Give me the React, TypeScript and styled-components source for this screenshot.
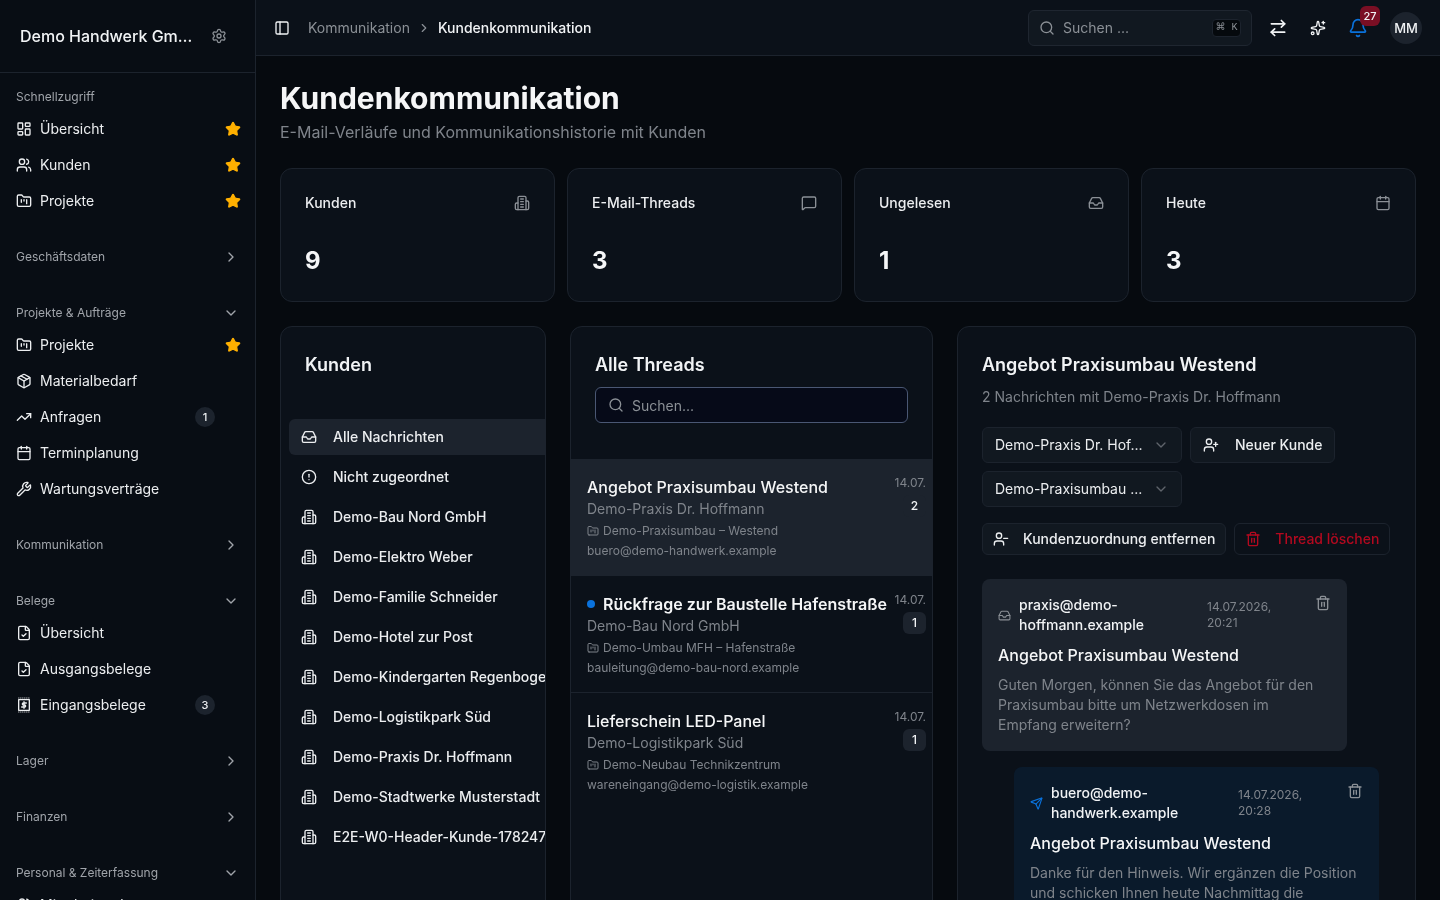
import React from "react";
import styled, { createGlobalStyle } from "styled-components";
import {
  ArrowRightLeft, Bell, Calendar, ChevronDown, ChevronRight, CircleAlert, FileCheck, FolderKanban,
  Inbox, LayoutDashboard, MessageSquare, Package, PanelLeft, Search, Send, Settings, Sparkles, Star,
  Trash2, TrendingUp, UserMinus, UserPlus, Users, Wrench,
} from "lucide-react";

const GlobalStyle = createGlobalStyle`
  html, body { margin: 0; height: 100%; background: #060a0f; overflow: hidden; }
  body { font-family: Inter, "Liberation Sans", sans-serif; color: #f1f3f5; font-size: 14px; line-height: 20px; -webkit-font-smoothing: antialiased; }
  * { box-sizing: border-box; }
`;

const Shell = styled.div`display: flex; height: 900px; overflow: hidden; will-change: transform;`;
const Sidebar = styled.aside`width: 256px; flex: none; background: #080d14; border-right: 1px solid #1c232d; overflow: hidden;`;
const Brand = styled.div`height: 73px; display: flex; align-items: center; padding: 0 20px; gap: 18px; border-bottom: 1px solid #1c232d;`;
const BrandName = styled.div`font-size: 16px; font-weight: 500; color: #f1f3f5; width: 173px; white-space: nowrap; overflow: hidden; text-overflow: ellipsis;`;
const SideNav = styled.nav`padding: 7px 16px 0; display: flex; flex-direction: column; gap: 21px;`;
const Section = styled.section<{ $open: boolean }>`padding-bottom: ${(p) => (p.$open ? 0 : 3)}px;`;
const SectionLabel = styled.div`height: 32px; padding-top: 2px; display: flex; align-items: center; justify-content: space-between; font-size: 12px; color: #a0a4aa; svg { color: #a0a4aa; }`;
const NavList = styled.div`margin-top: -1px; display: flex; flex-direction: column;`;
const NavRow = styled.div`height: 36px; display: flex; align-items: center; gap: 8px; color: #eceef0; font-size: 14px;`;
const NavName = styled.span`flex: 1; white-space: nowrap;`;
const NavStar = styled.span`display: flex; margin-right: -2px; color: #ffb000;`;
const NavBadge = styled.span`width: 20px; height: 20px; border-radius: 50%; background: #1c232d; font-size: 11px; font-weight: 500; display: flex; align-items: center; justify-content: center; margin-right: 24px;`;

const Content = styled.div`flex: 1; min-width: 0; display: flex; flex-direction: column;`;
const TopBar = styled.header`height: 56px; flex: none; background: #0b1119; border-bottom: 1px solid #1c232d; display: flex; align-items: center; padding: 0 18px 0 18px;`;
const Crumbs = styled.div`display: flex; align-items: center; margin-left: 18px; flex: 1;`;
const CrumbMuted = styled.span`color: #8b9096;`;
const CrumbSep = styled.span`display: flex; color: #8b9096; margin: 0 7px;`;
const CrumbNow = styled.span`color: #f1f3f5; font-weight: 500;`;
const TopSearch = styled.div`width: 224px; height: 36px; border: 1px solid #1f2630; border-radius: 6px; background: #111820; display: flex; align-items: center; padding: 0 10px; gap: 8px; color: #8b9096;`;
const TopSearchText = styled.span`flex: 1;`;
const Kbd = styled.span`width: 29px; height: 18px; border: 1px solid #1c232d; border-radius: 4px; background: #05090d; font-size: 10px; color: #8b9096; display: flex; align-items: center; justify-content: center; font-family: "Liberation Mono", "DejaVu Sans", monospace;`;
const TopActions = styled.div`display: flex; align-items: center; margin-left: 16px; color: #f1f3f5;`;
const IconSlot = styled.span<{ $blue?: boolean }>`position: relative; width: 20px; height: 20px; margin-right: 20px; display: flex; align-items: center; justify-content: center; color: ${(p) => (p.$blue ? "#0a72dc" : "#f1f3f5")};`;
const BellCount = styled.span`position: absolute; left: 12px; top: -12px; width: 20px; height: 20px; border-radius: 6px; background: #7a0f24; color: #f1f3f5; font-size: 11px; font-weight: 500; display: flex; align-items: center; justify-content: center;`;
const Avatar = styled.span`width: 32px; height: 32px; margin-left: 2px; border-radius: 50%; background: #1c232d; font-size: 13px; font-weight: 500; display: flex; align-items: center; justify-content: center;`;

const Main = styled.main`flex: 1; padding: 24px; overflow: hidden; min-height: 0;`;
const Title = styled.h1`margin: 0; font-size: 30px; line-height: 36px; font-weight: 700; color: #f5f6f7;`;
const Subtitle = styled.p`margin: 4px 0 0; font-size: 16px; line-height: 24px; color: #7f848b;`;
const Stats = styled.div`display: grid; grid-template-columns: repeat(4, 1fr); gap: 12px; margin-top: 24px;`;
const StatCard = styled.div`height: 134px; border: 1px solid #1c232d; border-radius: 12px; background: #0b1119; padding: 24px;`;
const StatHead = styled.div`display: flex; justify-content: space-between; align-items: center; font-weight: 500; color: #eceef0; svg { color: #8b9096; }`;
const StatValue = styled.div`margin-top: 32px; font-size: 24px; line-height: 32px; font-weight: 700; color: #f5f6f7;`;
const Panels = styled.div`display: grid; grid-template-columns: 266px 363px 459px; gap: 24px; margin-top: 24px;`;
const Panel = styled.section`height: 620px; border: 1px solid #1c232d; border-radius: 12px; background: #0b1119; overflow: hidden;`;
const PanelHead = styled.div`padding: 24px 24px 0;`;
const PanelTitle = styled.h2`margin: 0; font-size: 18px; line-height: 28px; font-weight: 600; color: #f1f3f5;`;

const CustomerList = styled.div`margin-top: 40px; padding-left: 8px; display: flex; flex-direction: column; gap: 4px;`;
const CustomerRow = styled.div<{ $active?: boolean }>`height: 36px; display: flex; align-items: center; gap: 16px; padding-left: 12px; border-radius: 6px 0 0 6px; white-space: nowrap; color: #eceef0; font-weight: 500; background: ${(p) => (p.$active ? "#1c232d" : "transparent")}; svg { flex: none; }`;

const ThreadSearch = styled.div`height: 36px; margin-top: 8px; border: 1px solid #4a5773; border-radius: 6px; background: #060a18; display: flex; align-items: center; gap: 8px; padding: 0 12px; color: #8b9096;`;
const ThreadSearchText = styled.span`padding-top: 2px;`;
const ThreadList = styled.div`margin-top: 36px;`;
const ThreadRow = styled.div<{ $active?: boolean }>`height: 117px; display: flex; gap: 8px; padding: 16px 6px 0 16px; border-bottom: 1px solid #1c232d; background: ${(p) => (p.$active ? "#1c232d" : "transparent")}; &:last-child { border-bottom: 0; }`;
const ThreadMain = styled.div`flex: 1; min-width: 0;`;
const ThreadTitle = styled.div<{ $unread?: boolean }>`display: flex; align-items: center; gap: 8px; font-size: 16px; line-height: 24px; white-space: nowrap; font-weight: ${(p) => (p.$unread ? 600 : 500)}; color: #f5f6f7;`;
const UnreadDot = styled.span`width: 8px; height: 8px; border-radius: 50%; background: #0a72dc; flex: none;`;
const ThreadCustomer = styled.div`color: #7f848b;`;
const ThreadProject = styled.div`margin-top: 4px; font-size: 12px; line-height: 16px; color: #7f848b; display: flex; align-items: center; gap: 4px;`;
const ThreadMail = styled.div`margin-top: 4px; font-size: 12px; line-height: 16px; color: #7f848b;`;
const ThreadSide = styled.div`width: 31px; flex: none; display: flex; flex-direction: column; align-items: flex-end; gap: 4px;`;
const ThreadDate = styled.div`font-size: 12px; line-height: 16px; color: #7f848b;`;
const CountBadge = styled.span`width: 23px; height: 22px; border-radius: 6px; background: #1c232d; color: #f1f3f5; font-size: 12px; font-weight: 500; display: flex; align-items: center; justify-content: center;`;

const PanelSub = styled.p`margin: 8px 0 0; color: #7f848b;`;
const Controls = styled.div`display: flex; flex-wrap: wrap; gap: 8px; margin-top: 20px; width: 360px;`;
const SelectBox = styled.div`width: 200px; height: 36px; border: 1px solid #1c232d; border-radius: 6px; background: #111820; display: flex; align-items: center; justify-content: space-between; padding: 0 12px; color: #eceef0; svg { color: #5f646b; }`;
const Actions = styled.div`display: flex; gap: 8px; margin-top: 16px;`;
const ActionBtn = styled.div<{ $danger?: boolean; $tall?: boolean }>`height: ${(p) => (p.$tall ? 36 : 32)}px; border: 1px solid #1c232d; border-radius: 6px; background: ${(p) => (p.$danger ? "#0b1119" : "#111820")}; display: flex; align-items: center; gap: ${(p) => (p.$tall ? 16 : 14)}px; padding: 0 ${(p) => (p.$tall ? 12 : 10)}px; font-weight: 500; white-space: nowrap; color: ${(p) => (p.$danger ? "#b3091f" : "#eceef0")};`;
const Messages = styled.div`margin-top: 24px; display: flex; flex-direction: column; gap: 16px;`;
const Message = styled.article<{ $sent?: boolean }>`width: 365px; flex: none; padding: 16px; border-radius: 8px; margin-left: ${(p) => (p.$sent ? 32 : 0)}px; background: ${(p) => (p.$sent ? "#0a1a2b" : "#1c232d")};`;
const MsgHead = styled.div`display: flex; align-items: center; gap: 8px; position: relative;`;
const MsgIcon = styled.span<{ $sent?: boolean }>`display: flex; color: ${(p) => (p.$sent ? "#0a72dc" : "#8b9096")};`;
const MsgFrom = styled.div<{ $sent?: boolean }>`width: ${(p) => (p.$sent ? 179 : 180)}px; font-weight: 500; color: #f1f3f5;`;
const MsgDate = styled.div`width: 74px; font-size: 12px; line-height: 16px; color: #7f848b;`;
const MsgTrash = styled.span`display: flex; align-self: flex-start; margin-left: auto; color: #8b9096;`;
const MsgTitle = styled.div`margin-top: 8px; font-size: 16px; line-height: 24px; font-weight: 500; color: #f5f6f7;`;
const MsgBody = styled.p`margin: 8px 0 0; color: #7f848b;`;

const BuildingIcon = ({ size = 16 }: { size?: number }) => (
  <svg width={size} height={size} viewBox="0 0 24 24" fill="none" stroke="currentColor" strokeWidth={2} strokeLinecap="round" strokeLinejoin="round">
    <path d="M6 22V4a2 2 0 0 1 2-2h8a2 2 0 0 1 2 2v18Z" />
    <path d="M6 12H4a2 2 0 0 0-2 2v6a2 2 0 0 0 2 2h2" />
    <path d="M18 9h2a2 2 0 0 1 2 2v9a2 2 0 0 1-2 2h-2" />
    <path d="M10 6h4M10 10h4M10 14h4M10 18h4" />
  </svg>
);

const ReceiptIcon = () => (
  <svg width={16} height={16} viewBox="0 0 24 24" fill="none" stroke="currentColor" strokeWidth={2} strokeLinejoin="round">
    <rect x={4} y={4} width={16} height={16} />
    <path d="M3.5 1.5h17M3.5 22.5h17" strokeDasharray="1.5 1.5" strokeWidth={1.5} />
    <path d="M15.5 9H11a1.5 1.5 0 0 0 0 3h2a1.5 1.5 0 0 1 0 3H8.5M12 7v10" strokeLinecap="round" />
  </svg>
);

const Fav = () => (
  <NavStar><Star size={16} fill="currentColor" /></NavStar>
);

type NavEntry = { icon: React.ReactNode; name: string; star?: boolean; badge?: number };
type NavGroup = { label: string; open: boolean; fixed?: boolean; items?: NavEntry[] };

const nav: NavGroup[] = [
  { label: "Schnellzugriff", open: true, fixed: true, items: [
    { icon: <LayoutDashboard size={16} />, name: "Übersicht", star: true },
    { icon: <Users size={16} />, name: "Kunden", star: true },
    { icon: <FolderKanban size={16} />, name: "Projekte", star: true },
  ] },
  { label: "Geschäftsdaten", open: false },
  { label: "Projekte & Aufträge", open: true, items: [
    { icon: <FolderKanban size={16} />, name: "Projekte", star: true },
    { icon: <Package size={16} />, name: "Materialbedarf" },
    { icon: <TrendingUp size={16} />, name: "Anfragen", badge: 1 },
    { icon: <Calendar size={16} />, name: "Terminplanung" },
    { icon: <Wrench size={16} />, name: "Wartungsverträge" },
  ] },
  { label: "Kommunikation", open: false },
  { label: "Belege", open: true, items: [
    { icon: <FileCheck size={16} />, name: "Übersicht" },
    { icon: <FileCheck size={16} />, name: "Ausgangsbelege" },
    { icon: <ReceiptIcon />, name: "Eingangsbelege", badge: 3 },
  ] },
  { label: "Lager", open: false },
  { label: "Finanzen", open: false },
  { label: "Personal & Zeiterfassung", open: true, items: [
    { icon: <Users size={16} />, name: "Mitarbeitende" },
  ] },
];

const customers = [
  "Demo-Bau Nord GmbH", "Demo-Elektro Weber", "Demo-Familie Schneider", "Demo-Hotel zur Post",
  "Demo-Kindergarten Regenbogen", "Demo-Logistikpark Süd", "Demo-Praxis Dr. Hoffmann",
  "Demo-Stadtwerke Musterstadt", "E2E-W0-Header-Kunde-1782470000",
];

const threads = [
  { title: "Angebot Praxisumbau Westend", customer: "Demo-Praxis Dr. Hoffmann", project: "Demo-Praxisumbau – Westend", mail: "buero@demo-handwerk.example", count: 2, active: true },
  { title: "Rückfrage zur Baustelle Hafenstraße", customer: "Demo-Bau Nord GmbH", project: "Demo-Umbau MFH – Hafenstraße", mail: "bauleitung@demo-bau-nord.example", count: 1, unread: true },
  { title: "Lieferschein LED-Panel", customer: "Demo-Logistikpark Süd", project: "Demo-Neubau Technikzentrum", mail: "wareneingang@demo-logistik.example", count: 1 },
];

const stats = [
  { label: "Kunden", value: 9, icon: <BuildingIcon /> },
  { label: "E-Mail-Threads", value: 3, icon: <MessageSquare size={16} /> },
  { label: "Ungelesen", value: 1, icon: <Inbox size={16} /> },
  { label: "Heute", value: 3, icon: <Calendar size={16} /> },
];

export default function App() {
  return (
    <>
      <GlobalStyle />
      <Shell>
        <Sidebar>
          <Brand>
            <BrandName>Demo Handwerk GmbH</BrandName>
            <Settings size={16} color="#8b9096" />
          </Brand>
          <SideNav>
            {nav.map((g) => (
              <Section key={g.label} $open={g.open}>
                <SectionLabel>
                  {g.label}
                  {!g.fixed && (g.open ? <ChevronDown size={16} /> : <ChevronRight size={16} />)}
                </SectionLabel>
                {g.items && (
                  <NavList>
                    {g.items.map((it) => (
                      <NavRow key={it.name}>
                        {it.icon}
                        <NavName>{it.name}</NavName>
                        {it.badge !== undefined && <NavBadge>{it.badge}</NavBadge>}
                        {it.star && <Fav />}
                      </NavRow>
                    ))}
                  </NavList>
                )}
              </Section>
            ))}
          </SideNav>
        </Sidebar>
        <Content>
          <TopBar>
            <PanelLeft size={16} />
            <Crumbs>
              <CrumbMuted>Kommunikation</CrumbMuted>
              <CrumbSep><ChevronRight size={14} /></CrumbSep>
              <CrumbNow>Kundenkommunikation</CrumbNow>
            </Crumbs>
            <TopSearch>
              <Search size={16} />
              <TopSearchText>Suchen ...</TopSearchText>
              <Kbd>⌘ K</Kbd>
            </TopSearch>
            <TopActions>
              <IconSlot><ArrowRightLeft size={20} /></IconSlot>
              <IconSlot><Sparkles size={16} /></IconSlot>
              <IconSlot $blue><Bell size={20} /><BellCount>27</BellCount></IconSlot>
              <Avatar>MM</Avatar>
            </TopActions>
          </TopBar>
          <Main>
            <Title>Kundenkommunikation</Title>
            <Subtitle>E-Mail-Verläufe und Kommunikationshistorie mit Kunden</Subtitle>
            <Stats>
              {stats.map((s) => (
                <StatCard key={s.label}>
                  <StatHead>{s.label}{s.icon}</StatHead>
                  <StatValue>{s.value}</StatValue>
                </StatCard>
              ))}
            </Stats>
            <Panels>
              <Panel>
                <PanelHead><PanelTitle>Kunden</PanelTitle></PanelHead>
                <CustomerList>
                  <CustomerRow $active><Inbox size={16} />Alle Nachrichten</CustomerRow>
                  <CustomerRow><CircleAlert size={16} />Nicht zugeordnet</CustomerRow>
                  {customers.map((c) => (
                    <CustomerRow key={c}><BuildingIcon />{c}</CustomerRow>
                  ))}
                </CustomerList>
              </Panel>
              <Panel>
                <PanelHead>
                  <PanelTitle>Alle Threads</PanelTitle>
                  <ThreadSearch><Search size={16} /><ThreadSearchText>Suchen...</ThreadSearchText></ThreadSearch>
                </PanelHead>
                <ThreadList>
                  {threads.map((t) => (
                    <ThreadRow key={t.title} $active={t.active}>
                      <ThreadMain>
                        <ThreadTitle $unread={t.unread}>
                          {t.unread && <UnreadDot />}
                          {t.title}
                        </ThreadTitle>
                        <ThreadCustomer>{t.customer}</ThreadCustomer>
                        <ThreadProject><FolderKanban size={12} />{t.project}</ThreadProject>
                        <ThreadMail>{t.mail}</ThreadMail>
                      </ThreadMain>
                      <ThreadSide>
                        <ThreadDate>14.07.</ThreadDate>
                        <CountBadge>{t.count}</CountBadge>
                      </ThreadSide>
                    </ThreadRow>
                  ))}
                </ThreadList>
              </Panel>
              <Panel>
                <PanelHead>
                  <PanelTitle>Angebot Praxisumbau Westend</PanelTitle>
                  <PanelSub>2 Nachrichten mit Demo-Praxis Dr. Hoffmann</PanelSub>
                  <Controls>
                    <SelectBox>Demo-Praxis Dr. Hof...<ChevronDown size={16} /></SelectBox>
                    <ActionBtn $tall><UserPlus size={16} />Neuer Kunde</ActionBtn>
                    <SelectBox>Demo-Praxisumbau ...<ChevronDown size={16} /></SelectBox>
                  </Controls>
                  <Actions>
                    <ActionBtn><UserMinus size={16} />Kundenzuordnung entfernen</ActionBtn>
                    <ActionBtn $danger><Trash2 size={16} />Thread löschen</ActionBtn>
                  </Actions>
                  <Messages>
                    <Message>
                      <MsgHead>
                        <MsgIcon><Inbox size={13} /></MsgIcon>
                        <MsgFrom>praxis@demo-hoffmann.example</MsgFrom>
                        <MsgDate>14.07.2026, 20:21</MsgDate>
                        <MsgTrash><Trash2 size={16} /></MsgTrash>
                      </MsgHead>
                      <MsgTitle>Angebot Praxisumbau Westend</MsgTitle>
                      <MsgBody>Guten Morgen, können Sie das Angebot für den Praxisumbau bitte um Netzwerkdosen im Empfang erweitern?</MsgBody>
                    </Message>
                    <Message $sent>
                      <MsgHead>
                        <MsgIcon $sent><Send size={13} /></MsgIcon>
                        <MsgFrom $sent>buero@demo-handwerk.example</MsgFrom>
                        <MsgDate>14.07.2026, 20:28</MsgDate>
                        <MsgTrash><Trash2 size={16} /></MsgTrash>
                      </MsgHead>
                      <MsgTitle>Angebot Praxisumbau Westend</MsgTitle>
                      <MsgBody>Danke für den Hinweis. Wir ergänzen die Position und schicken Ihnen heute Nachmittag die aktualisierte Fassung.</MsgBody>
                    </Message>
                  </Messages>
                </PanelHead>
              </Panel>
            </Panels>
          </Main>
        </Content>
      </Shell>
    </>
  );
}
